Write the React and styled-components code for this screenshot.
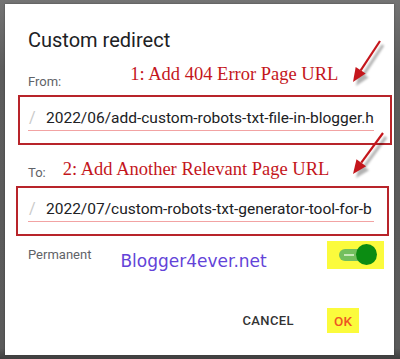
import React from 'react'
import styled, { createGlobalStyle } from 'styled-components'

const GlobalStyle = createGlobalStyle`
  body {
    margin: 0;
    background: #5e5e5e;
    font-family: Roboto, "Liberation Sans", sans-serif;
  }
`

function Arrows() {
  return (
    <ArrowLayer width="400" height="359" viewBox="0 0 400 359">
      <defs>
        <filter id="soft" x="-20%" y="-20%" width="140%" height="140%">
          <feGaussianBlur stdDeviation="1.2" />
        </filter>
      </defs>
      <g stroke="#000" strokeOpacity="0.3" fill="#000" fillOpacity="0.3" transform="translate(3 4)" filter="url(#soft)">
        <line x1="380" y1="41" x2="360.7" y2="70.3" strokeWidth="3" />
        <polygon points="353,82 365.7,73.6 355.7,67" stroke="none" />
        <line x1="383" y1="133" x2="361.3" y2="162.7" strokeWidth="3" />
        <polygon points="353,174 366.1,166.2 356.5,159.2" stroke="none" />
      </g>
      <g stroke="#c4161c" fill="#c4161c">
        <line x1="380" y1="41" x2="360.7" y2="70.3" strokeWidth="2.2" />
        <polygon points="353,82 365.7,73.6 355.7,67" stroke="none" />
        <line x1="383" y1="133" x2="361.3" y2="162.7" strokeWidth="2.2" />
        <polygon points="353,174 366.1,166.2 356.5,159.2" stroke="none" />
      </g>
    </ArrowLayer>
  )
}

function App() {
  return (
    <Backdrop>
      <GlobalStyle />
      <Dialog>
        <Title>Custom redirect</Title>

        <LabelRow>
          <Label>From:</Label>
          <Annotation $gap={69} $lift={6}>1: Add 404 Error Page URL</Annotation>
        </LabelRow>
        <RedBox $left={10} $right={21} $padLeft={8} $padRight={16}>
          <Field>
            <Slash>/</Slash>
            <Path>2022/06/add-custom-robots-txt-file-in-blogger.h</Path>
          </Field>
        </RedBox>

        <LabelRow $top={18}>
          <Label>To:</Label>
          <Annotation $gap={17} $lift={2}>2: Add Another Relevant Page URL</Annotation>
        </LabelRow>
        <RedBox $left={12} $right={18} $padLeft={10} $padRight={13}>
          <Field>
            <Slash>/</Slash>
            <Path>2022/07/custom-robots-txt-generator-tool-for-b</Path>
          </Field>
        </RedBox>

        <ToggleRow>
          <Label>Permanent</Label>
          <Brand>Blogger4ever.net</Brand>
          <Highlight $w={57} $h={28} $right={-13}>
            <Track>
              <Knob />
            </Track>
          </Highlight>
        </ToggleRow>

        <Actions>
          <TextButton>CANCEL</TextButton>
          <Highlight $w={32} $h={25} $right={12}>
            <OkText>OK</OkText>
          </Highlight>
        </Actions>
      </Dialog>
      <Arrows />
    </Backdrop>
  )
}

export default App

const Backdrop = styled.div`
  position: relative;
  width: 400px;
  height: 359px;
  box-sizing: border-box;
  padding: 4px 6px 4px 5px;
  background: linear-gradient(#747474, #5c5c5c 20%, #5a5a5a 97%, #3e3e3e);
  overflow: hidden;
`

const ArrowLayer = styled.svg`
  position: absolute;
  left: 0;
  top: 0;
  pointer-events: none;
`

const Dialog = styled.div`
  background: #fff;
  height: 351px;
  box-sizing: border-box;
  padding: 24px 23px 22px 23px;
  display: flex;
  flex-direction: column;
  box-shadow: 0 0 2px rgba(0, 0, 0, 0.35);
`

const Title = styled.div`
  font-size: 20px;
  line-height: 24px;
  color: #202124;
`

const LabelRow = styled.div`
  display: flex;
  align-items: baseline;
  height: 18px;
  margin-top: ${p => p.$top ?? 20}px;
`

const Label = styled.span`
  font-size: 13px;
  line-height: 16px;
  color: #5f6368;
`

const Annotation = styled.span`
  position: relative;
  top: -${p => p.$lift}px;
  margin-left: ${p => p.$gap}px;
  font-family: "Liberation Serif", "Times New Roman", serif;
  font-size: 18.5px;
  line-height: 16px;
  color: #c4161c;
  white-space: nowrap;
`

const RedBox = styled.div`
  margin: 5px -${p => p.$right}px 0 -${p => p.$left}px;
  border: 2px solid #b8242a;
  padding: 11px ${p => p.$padRight}px 12px ${p => p.$padLeft}px;
`

const Field = styled.div`
  display: flex;
  align-items: baseline;
  padding-bottom: 2px;
  border-bottom: 1px solid #f2a3a3;
`

const Slash = styled.span`
  flex: none;
  width: 18px;
  padding-left: 1px;
  box-sizing: border-box;
  font-size: 16px;
  line-height: 20px;
  color: #c9c9c9;
`

const Path = styled.span`
  font-size: 15.5px;
  line-height: 20px;
  color: #202124;
  white-space: nowrap;
`

const ToggleRow = styled.div`
  display: flex;
  align-items: center;
  height: 28px;
  margin-top: 5px;
`

const Brand = styled.span`
  margin: 12px 0 0 29px;
  font-family: "Comic Sans MS", "DejaVu Sans", sans-serif;
  font-size: 17px;
  color: #6343d8;
`

const Highlight = styled.div`
  margin-left: auto;
  margin-right: ${p => p.$right}px;
  width: ${p => p.$w}px;
  height: ${p => p.$h}px;
  background: #fbfb3c;
  display: flex;
  align-items: center;
  justify-content: center;
`

const Track = styled.div`
  position: relative;
  width: 36px;
  height: 12px;
  margin-left: 2px;
  border-radius: 6px;
  background: #72bf5e;

  &::before {
    content: "";
    position: absolute;
    left: 5px;
    top: 5px;
    width: 10px;
    height: 2px;
    background: #c6e8b8;
  }
`

const Knob = styled.div`
  position: absolute;
  right: -2px;
  top: -5px;
  width: 21px;
  height: 21px;
  border-radius: 50%;
  background: #0b8c12;
`

const Actions = styled.div`
  display: flex;
  align-items: center;
  margin-top: 39px;
  height: 25px;

  & > ${Highlight} {
    margin-left: 0;
  }
`

const TextButton = styled.button`
  margin-left: auto;
  margin-right: 33px;
  padding: 0;
  border: none;
  background: none;
  font-family: Roboto, "Liberation Sans", sans-serif;
  font-size: 13px;
  font-weight: 500;
  letter-spacing: 0.4px;
  color: #333;
`

const OkText = styled.span`
  font-size: 13.5px;
  font-weight: 500;
  color: #ee5522;
`
